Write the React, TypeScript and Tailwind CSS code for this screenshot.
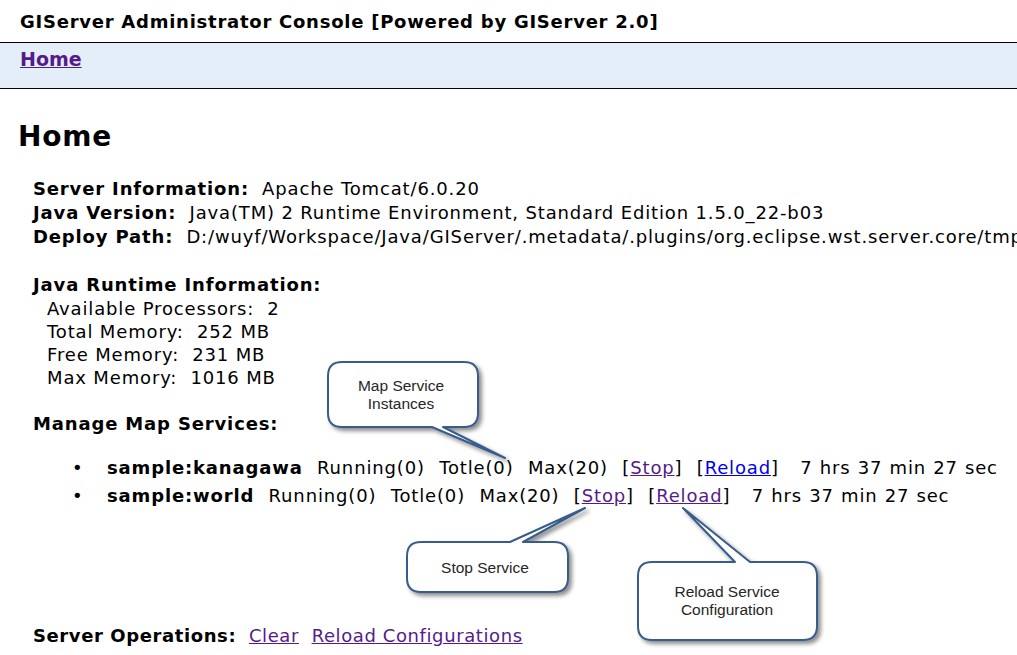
import React from "react";

const Callouts = () => (
  <svg className="absolute left-0 top-0 pointer-events-none" width={1017} height={655}>
    <defs>
      <filter id="sh" x="-20%" y="-20%" width="150%" height="160%">
        <feDropShadow dx="3" dy="3" stdDeviation="2.2" floodColor="#000" floodOpacity="0.45" />
      </filter>
    </defs>
    <g fill="#fff" stroke="#385d8a" strokeWidth="2" filter="url(#sh)" strokeLinejoin="round">
      <path d="M 342 362 H 464 Q 478 362 478 376 V 413 Q 478 427 464 427 H 443 L 505 458 L 432 427 H 342 Q 328 427 328 413 V 376 Q 328 362 342 362 Z" />
      <path d="M 421 542 H 510 L 585 508 L 523 542 H 554 Q 568 542 568 556 V 578 Q 568 592 554 592 H 421 Q 407 592 407 578 V 556 Q 407 542 421 542 Z" />
      <path d="M 652 562 H 735 L 683 508 L 750 562 H 803 Q 817 562 817 576 V 626 Q 817 640 803 640 H 652 Q 638 640 638 626 V 576 Q 638 562 652 562 Z" />
    </g>
    <g fill="#262626" fontFamily="'Liberation Sans', Arial, sans-serif" fontSize="15.5" textAnchor="middle">
      <text x="401" y="391">Map Service</text>
      <text x="401" y="409">Instances</text>
      <text x="485" y="573">Stop Service</text>
      <text x="727" y="597">Reload Service</text>
      <text x="727" y="615">Configuration</text>
    </g>
  </svg>
);

const Bullet = () => <span className="inline-block w-[35px]">•</span>;

export default function App() {
  return (
    <div className="relative w-[1017px] h-[655px] overflow-hidden bg-white text-black font-['Verdana','DejaVu_Sans',sans-serif]">
      <div className="h-[42px] pl-[20px] flex items-center text-[18px] font-bold tracking-[0.75px] whitespace-nowrap">
        GIServer Administrator Console [Powered by GIServer 2.0]
      </div>
      <div className="h-[47px] border-y border-black bg-[#e4eef8] pl-[20px] pt-[2px]">
        <a href="#" className="text-[19px] font-bold text-[#551a8b] underline">Home</a>
      </div>
      <h1 className="pl-[18px] mt-[30px] text-[28px] font-bold leading-[36px] tracking-[0.8px]">Home</h1>
      <div className="pl-[33px] mt-[22px] text-[18px] leading-[24px] tracking-[0.85px] whitespace-nowrap">
        <div><b>Server Information:</b>&nbsp; Apache Tomcat/6.0.20</div>
        <div><b>Java Version:</b>&nbsp; Java(TM) 2 Runtime Environment, Standard Edition 1.5.0_22-b03</div>
        <div><b>Deploy Path:</b>&nbsp; D:/wuyf/Workspace/Java/GIServer/.metadata/.plugins/org.eclipse.wst.server.core/tmp</div>
        <div className="mt-[24px]"><b>Java Runtime Information:</b></div>
        <div className="pl-[14px] leading-[23px]">
          <div>Available Processors:&nbsp; 2</div>
          <div>Total Memory:&nbsp; 252 MB</div>
          <div>Free Memory:&nbsp; 231 MB</div>
          <div>Max Memory:&nbsp; 1016 MB</div>
        </div>
        <div className="mt-[23px]"><b>Manage Map Services:</b></div>
        <ul className="mt-[18px] pl-[39px] list-none leading-[28px] [word-spacing:0.6px]">
          <li>
            <Bullet /><b>sample:kanagawa</b>&nbsp; Running(0)&nbsp; Totle(0)&nbsp; Max(20)&nbsp; [<a href="#" className="text-[#551a8b] underline">Stop</a>]&nbsp; [<a href="#" className="text-[#0000ee] underline">Reload</a>]&nbsp;&nbsp; 7 hrs 37 min 27 sec
          </li>
          <li>
            <Bullet /><b>sample:world</b>&nbsp; Running(0)&nbsp; Totle(0)&nbsp; Max(20)&nbsp; [<a href="#" className="text-[#551a8b] underline">Stop</a>]&nbsp; [<a href="#" className="text-[#551a8b] underline">Reload</a>]&nbsp;&nbsp; 7 hrs 37 min 27 sec
          </li>
        </ul>
        <div className="mt-[114px] tracking-[0.6px]">
          <b>Server Operations:</b>&nbsp; <a href="#" className="text-[#551a8b] underline">Clear</a>&nbsp; <a href="#" className="text-[#551a8b] underline">Reload Configurations</a>
        </div>
      </div>
      <Callouts />
    </div>
  );
}
